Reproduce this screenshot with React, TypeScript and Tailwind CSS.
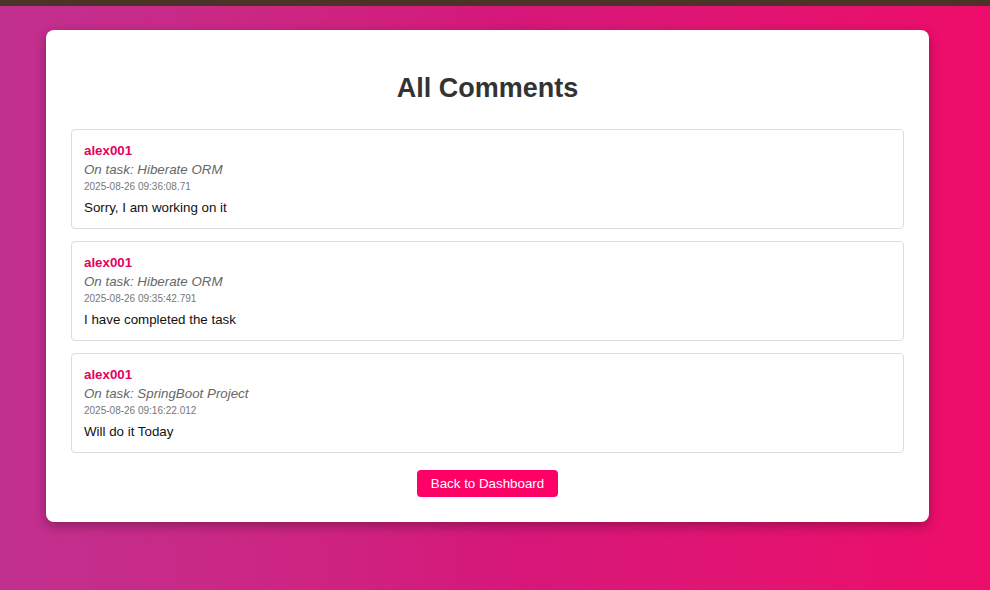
import React from "react";

type Comment = {
  user: string;
  task: string;
  at: string;
  text: string;
};

const comments: Comment[] = [
  { user: "alex001", task: "Hiberate ORM", at: "2025-08-26 09:36:08.71", text: "Sorry, I am working on it" },
  { user: "alex001", task: "Hiberate ORM", at: "2025-08-26 09:35:42.791", text: "I have completed the task" },
  { user: "alex001", task: "SpringBoot Project", at: "2025-08-26 09:16:22.012", text: "Will do it Today" },
];

export default function App() {
  return (
    <div className="min-h-[590px] font-['Liberation_Sans',Arial,sans-serif] text-[13.33px] bg-gradient-to-r from-[#c1308f] via-[#d5187a] to-[#ee0c6a]">
      <div className="h-[6px] bg-[#4b3327]" />
      <div className="pt-[24px] pb-[60px]">
        <div className="ml-[46px] w-[883px] rounded-[8px] bg-white p-[25px] shadow-[0_4px_12px_rgba(0,0,0,0.3)]">
          <h2 className="mt-[17px] mb-[25px] text-center text-[27px] leading-[32px] font-bold text-[#333]">All Comments</h2>
          <div className="flex flex-col gap-[12px]">
            {comments.map((c, i) => (
              <div key={i} className="h-[100px] rounded-[4px] border border-[#ddd] px-[12px] pt-[13px]">
                <p className="leading-[16px] font-bold text-[#e6005c]">{c.user}</p>
                <p className="mt-[3px] leading-[16px] italic text-[#666]">On task: {c.task}</p>
                <p className="mt-[3px] text-[10px] leading-[12px] text-[#777]">{c.at}</p>
                <p className="mt-[7px] leading-[16px] text-[#111]">{c.text}</p>
              </div>
            ))}
          </div>
          <div className="mt-[17px] flex justify-center">
            <button type="button" className="h-[27px] rounded-[4px] bg-[#ff0066] px-[14px] text-white">
              Back to Dashboard
            </button>
          </div>
        </div>
      </div>
    </div>
  );
}
